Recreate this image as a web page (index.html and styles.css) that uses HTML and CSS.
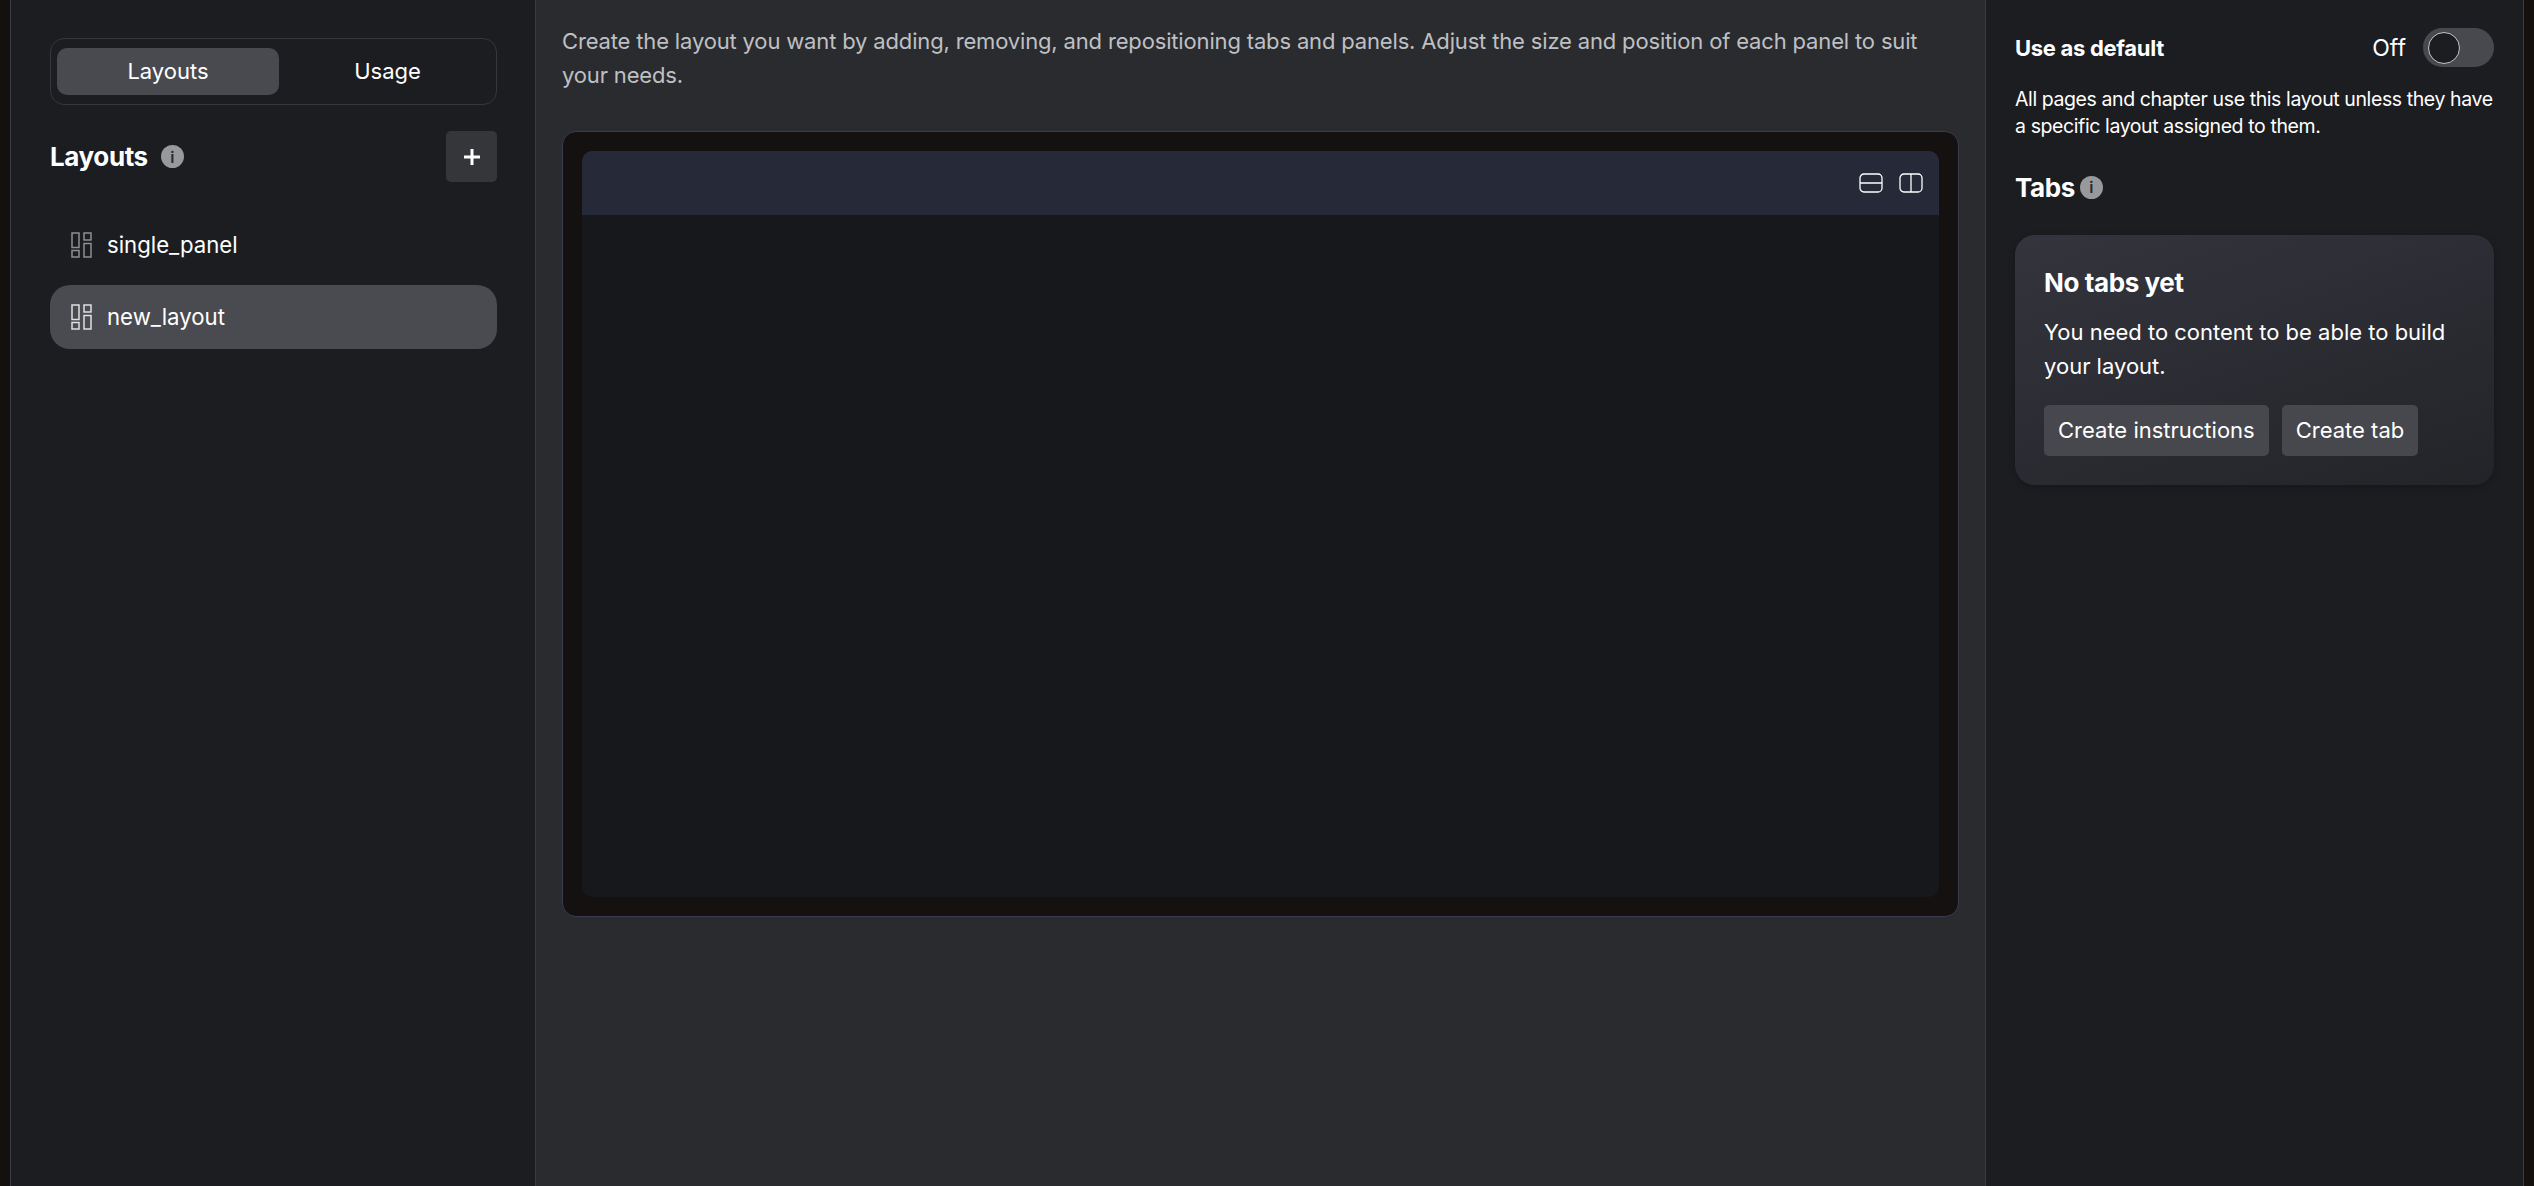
FILE: index.html
```html
<!DOCTYPE html>
<html lang="en">
<head>
<meta charset="utf-8">
<title>Layouts</title>
<link rel="stylesheet" href="styles.css">
</head>
<body>
<div class="app">
  <aside class="sidebar">
    <div class="segment">
      <button class="segment-item active">Layouts</button>
      <button class="segment-item">Usage</button>
    </div>
    <div class="section-head">
      <div class="title-row">
        <h2 class="heading">Layouts</h2>
        <span class="info">i</span>
      </div>
      <button class="add-btn">
        <svg width="16" height="16" viewBox="0 0 16 16"><path d="M8 0v16M0 8h16" stroke="#fff" stroke-width="3" fill="none"/></svg>
      </button>
    </div>
    <ul class="layout-list">
      <li class="layout-item">
        <svg class="grid-icon dim" width="21" height="26" viewBox="0 0 21 26"><g fill="none" stroke="currentColor" stroke-width="1.5"><rect x="1" y="1" width="7" height="14.5"/><rect x="13" y="1" width="7" height="7"/><rect x="1" y="18.5" width="7" height="6.5"/><rect x="13" y="11.5" width="7" height="13.5"/></g></svg>
        <span class="layout-name">single_panel</span>
      </li>
      <li class="layout-item selected">
        <svg class="grid-icon" width="21" height="26" viewBox="0 0 21 26"><g fill="none" stroke="currentColor" stroke-width="1.5"><rect x="1" y="1" width="7" height="14.5"/><rect x="13" y="1" width="7" height="7"/><rect x="1" y="18.5" width="7" height="6.5"/><rect x="13" y="11.5" width="7" height="13.5"/></g></svg>
        <span class="layout-name">new_layout</span>
      </li>
    </ul>
  </aside>
  <main class="main">
    <p class="intro">Create the layout you want by adding, removing, and repositioning tabs and panels. Adjust the size and position of each panel to suit your needs.</p>
    <div class="canvas">
      <div class="panel">
        <div class="panel-bar">
          <svg width="24" height="20" viewBox="0 0 24 20"><g fill="none" stroke="#fff" stroke-width="1.3"><rect x="1" y="1" width="22" height="18" rx="4"/><path d="M1 10h22"/></g></svg>
          <svg width="24" height="20" viewBox="0 0 24 20"><g fill="none" stroke="#fff" stroke-width="1.3"><rect x="1" y="1" width="22" height="18" rx="4"/><path d="M12 1v18"/></g></svg>
        </div>
      </div>
    </div>
  </main>
  <aside class="props">
    <div class="default-row">
      <strong class="default-label">Use as default</strong>
      <div class="toggle-wrap">
        <span class="off">Off</span>
        <span class="toggle"><span class="knob"></span></span>
      </div>
    </div>
    <p class="hint">All pages and chapter use this layout unless they have a specific layout assigned to them.</p>
    <div class="tabs-title">
      <h2 class="heading">Tabs</h2>
      <span class="info">i</span>
    </div>
    <section class="empty-card">
      <h3 class="empty-title">No tabs yet</h3>
      <p class="empty-text">You need to content to be able to build your layout.</p>
      <div class="empty-actions">
        <button class="action">Create instructions</button>
        <button class="action">Create tab</button>
      </div>
    </section>
  </aside>
</div>
</body>
</html>
```
FILE: styles.css
```css
* { box-sizing: border-box; }
html, body { margin: 0; height: 100%; }
body {
  background: #14100e;
  color: #fff;
  font-family: Inter, "Liberation Sans", sans-serif;
  overflow: hidden;
}
button { font-family: inherit; border: 0; color: #fff; cursor: pointer; }
.app { display: flex; height: 1186px; padding-left: 10px; }
.sidebar {
  width: 526px;
  flex: none;
  background: #1c1d21;
  border-left: 1px solid #3a3b40;
  border-right: 1px solid #3a3b40;
  padding: 38px 38px 0 39px;
}
.segment {
  display: flex;
  height: 67px;
  padding: 9px 6px;
  border: 1px solid #36373c;
  border-radius: 14px;
}
.segment-item {
  flex: 1;
  background: transparent;
  border-radius: 10px;
  padding: 0 0 2px 6px;
  font-size: 22px;
}
.segment-item.active { flex: 0 0 222px; padding-left: 0; background: #494a4f; }
.section-head {
  display: flex;
  justify-content: space-between;
  align-items: center;
  margin-top: 26px;
  height: 51px;
}
.title-row { display: flex; align-items: center; gap: 13px; }
.heading { margin: 0; font-size: 26px; font-weight: 700; letter-spacing: -0.4px; }
.info {
  width: 23px;
  height: 23px;
  border-radius: 50%;
  background: #98999c;
  color: #2a2b2e;
  font-size: 16px;
  font-weight: 600;
  display: flex;
  align-items: center;
  justify-content: center;
}
.add-btn {
  width: 51px;
  height: 51px;
  border-radius: 5px;
  background: #35363a;
  display: flex;
  align-items: center;
  justify-content: center;
  padding: 0;
}
.layout-list { list-style: none; margin: 31px 0 0; padding: 0; display: flex; flex-direction: column; gap: 8px; }
.layout-item {
  height: 64px;
  display: flex;
  align-items: center;
  gap: 15px;
  padding-left: 21px;
  border-radius: 20px;
  font-size: 22.2px;
}
.layout-name { padding-bottom: 2px; }
.layout-item.selected { background: #4a4b50; }
.grid-icon { color: #e0e0e0; flex: none; }
.grid-icon.dim { color: #8e8f92; }
.main {
  width: 1449px;
  flex: none;
  background: #2a2b2f;
  padding: 24px 26px 0;
}
.intro {
  margin: 0;
  font-size: 22px;
  line-height: 34px;
  letter-spacing: -0.16px;
  color: #bfc0c3;
}
.canvas {
  margin-top: 39px;
  height: 786px;
  padding: 19px;
  background: #151110;
  border: 1px solid #3b3b52;
  border-radius: 14px;
}
.panel {
  height: 100%;
  background: #17181c;
  border-radius: 10px;
  overflow: hidden;
}
.panel-bar {
  height: 64px;
  background: #262a38;
  display: flex;
  align-items: center;
  justify-content: flex-end;
  gap: 16px;
  padding-right: 16px;
}
.props {
  width: 539px;
  flex: none;
  background: #1c1d21;
  border-left: 1px solid #3a3b40;
  border-right: 1px solid #3a3b40;
  padding: 28px 29px 0;
}
.default-row {
  display: flex;
  justify-content: space-between;
  align-items: center;
  height: 39px;
}
.default-label { font-size: 22px; font-weight: 700; letter-spacing: -0.3px; }
.toggle-wrap { display: flex; align-items: center; gap: 17px; }
.off { font-size: 23px; }
.toggle {
  width: 71px;
  height: 39px;
  border-radius: 20px;
  background: #48494e;
  display: flex;
  align-items: center;
  padding-left: 5px;
}
.knob {
  width: 32px;
  height: 32px;
  border-radius: 50%;
  background: #1c1d21;
  border: 1px solid #c4c4c4;
}
.hint {
  margin: 19px 0 0;
  font-size: 19.5px;
  line-height: 27px;
  letter-spacing: -0.4px;
}
.tabs-title { display: flex; align-items: center; gap: 5px; margin-top: 27px; height: 40px; }
.empty-card {
  margin-top: 28px;
  height: 250px;
  padding: 30px 29px 0;
  border-radius: 20px;
  background: linear-gradient(160deg, #34343e 0%, #232428 100%);
  box-shadow: 0 2px 6px rgba(0, 0, 0, 0.25);
}
.empty-title { margin: 0; font-size: 26px; line-height: 36px; font-weight: 700; letter-spacing: -0.4px; }
.empty-text { margin: 14px 0 0; font-size: 22px; line-height: 34px; }
.empty-actions { display: flex; gap: 13px; margin-top: 22px; }
.action {
  height: 51px;
  padding: 0 14px 2px;
  border-radius: 5px;
  background: #47484d;
  font-size: 22px;
}
```
